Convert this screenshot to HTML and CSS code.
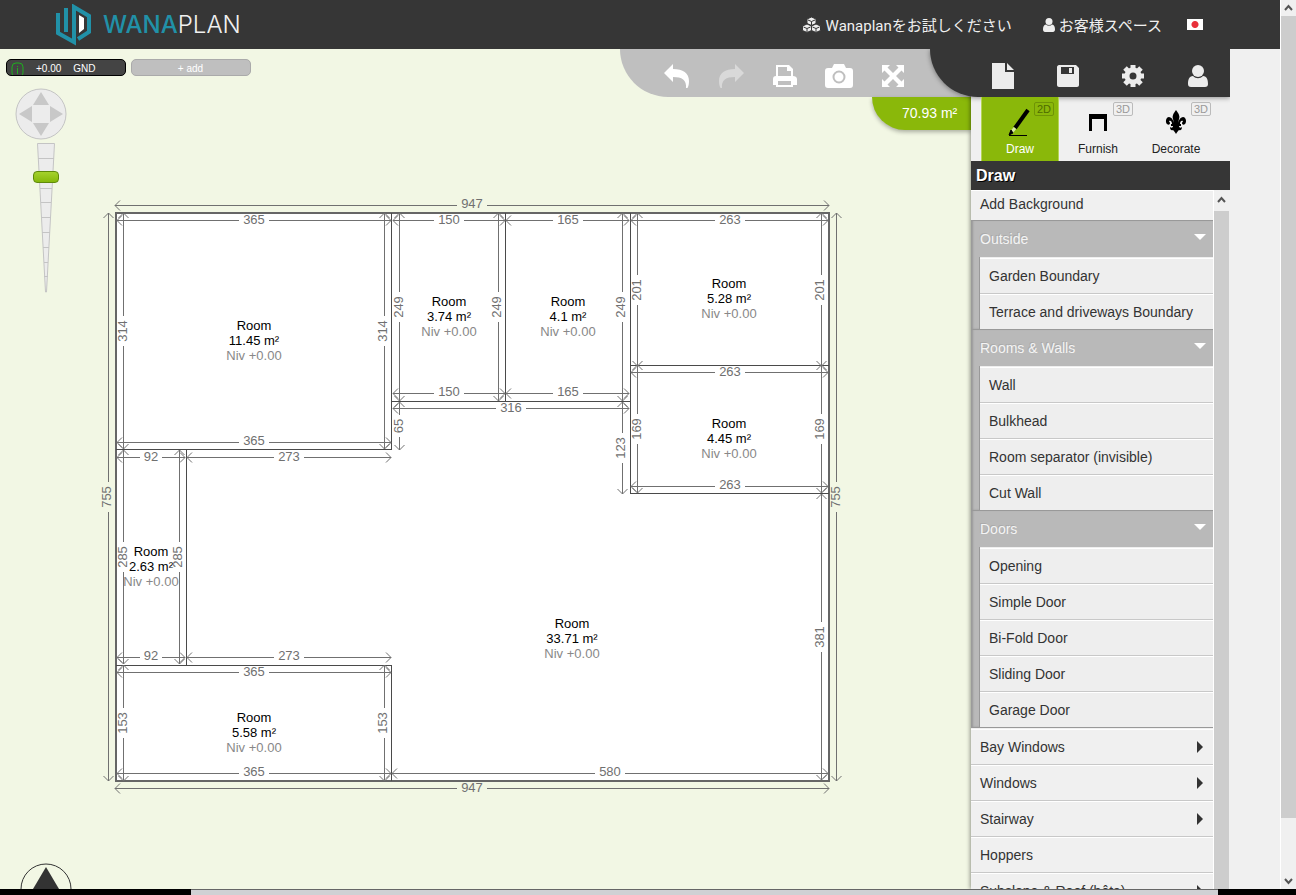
FILE: index.html
```html
<!DOCTYPE html>
<html lang="ja">

<head>
    <meta charset="UTF-8">
    <meta name="viewport" content="width=device-width, initial-scale=1.0">
    <title>Wanaplan</title>
    <link rel="stylesheet" href="styles.css">
</head>

<body>
    <div class="screen">
        <div class="page">
            <header class="header">
                <a href="#" class="logo">
                    <svg width="36" height="42" viewBox="0 0 36 42" fill="none" stroke="#2191a8" stroke-width="4">
                        <path d="M3 9v20l16 9V3l15 9v16l-11 7" />
                        <path d="M11 4v24" />
                        <path d="M24 11l5 3v11l-5 4z" fill="#fff" stroke="none" />
                    </svg>
                    <span class="logo-text"><b>WANA</b>PLAN</span>
                </a>
                <nav class="nav">
                    <a href="#">
                        <svg width="19" height="16" viewBox="0 0 19 16" fill="#eee" stroke="#363636" stroke-width="1">
                            <path d="M9.500 0l4.500 2v4.500l-4.500 2-4.500-2V2z" />
                            <path d="M5 7l4.500 2v4.500l-4.500 2-4.500-2V9z" />
                            <path d="M14 7l4.500 2v4.500l-4.500 2-4.500-2V9z" />
                            <path d="M6 3l3.500 1.500L13 3M1.500 10L5 11.500 8.500 10M10.500 10l3.500 1.500 3.500-1.500M9.500 4.500V8M5 11.500V15M14 11.500V15" fill="none" />
                        </svg>
                        Wanaplanをお試しください
                    </a>
                    <a href="#" class="account">
                        <svg width="12" height="14" viewBox="0 0 12 14" fill="#eee">
                            <circle cx="6" cy="3.500" r="3.500" />
                            <path d="M3 6.500c1.500 1.600 4.500 1.600 6 0 2.300.3 3 2.500 3 5 0 1.500-.8 2.500-2 2.500H2c-1.200 0-2-1-2-2.500 0-2.500.7-4.700 3-5z" />
                        </svg>
                        お客様スペース
                    </a>
                    <a href="#" class="flag" aria-label="日本語"></a>
                </nav>
            </header>

            <main class="workspace">
                <section class="canvas">
                    <svg class="plan" width="971" height="840" viewBox="0 49 971 840">
                        <defs>
                            <marker id="arrow" viewBox="0 0 7 12" refX="6" refY="6" markerWidth="7" markerHeight="12" markerUnits="userSpaceOnUse" orient="auto-start-reverse">
                                <path d="M1 1l5 5-5 5" fill="none" stroke="#707070" />
                            </marker>
                        </defs>
                        <rect class="outer" x="116" y="213" width="713" height="568" />
                        <path class="walls" d="M391 213V450M116 449H392M505 213V402M391 401H630M630 213V494M630 365H829M630 493H829M186 449V665M116 665H392M391 665V781" />
                        <g id="dims"></g>
                        <g id="rooms"></g>
                    </svg>

                    <div class="levels">
                        <button type="button" class="level">
                            <svg width="13" height="14" viewBox="0 0 13 14" fill="none" stroke="#1fae1f">
                                <rect x="1" y="1" width="11" height="14" rx="4" />
                                <path d="M6.500 4v1M6.500 6v6" />
                            </svg>
                            <span>+0.00</span>
                            <span>GND</span>
                        </button>
                        <button type="button" class="level add">+ add</button>
                    </div>

                    <div class="navigator">
                        <svg width="52" height="52" viewBox="0 0 52 52" fill="#c8c8c8">
                            <circle cx="26" cy="26" r="25" fill="#ececec" stroke="#c4c4c4" />
                            <path d="M26 4l8 13H18zM26 48l8-13H18zM4 26l13-8v16zM48 26l-13-8v16z" />
                        </svg>
                        <div class="zoom">
                            <svg width="26" height="150" viewBox="0 0 26 150" fill="#ececec" stroke="#c4c4c4">
                                <path d="M4.500.500h17L13.500 149h-1z" />
                                <path d="M5 15.500h16M6 30.500h14M7 45.500h12M8 59.500h10M9 74.500h8M9 89.500h8M10 104.500h6M11 119.500h4M11 133.500h4" />
                            </svg>
                            <input type="range" min="0" max="100" value="20" aria-label="Zoom">
                        </div>
                    </div>

                    <svg class="compass" width="52" height="26" viewBox="0 0 52 26">
                        <circle cx="26" cy="26" r="25" fill="none" stroke="#333" />
                        <path d="M26 4l13 22H13z" fill="#333" />
                    </svg>

                    <div class="tools">
                        <button type="button" aria-label="Undo">
                            <svg width="26" height="24" viewBox="0 0 26 24" fill="#fff">
                                <path d="M0 9L9 0v5c10 0 16 4 16 12 0 3-.5 5-1.500 7h-1.500c.8-8-4-11-13-11v5z" />
                            </svg>
                        </button>
                        <button type="button" aria-label="Redo">
                            <svg width="26" height="24" viewBox="0 0 26 24" fill="#d9d9d9">
                                <path d="M26 9l-9-9v5C7 5 1 9 1 17c0 3 .5 5 1.500 7H4c-.8-8 4-11 13-11v5z" />
                            </svg>
                        </button>
                        <button type="button" aria-label="Print">
                            <svg width="24" height="22" viewBox="0 0 24 22" fill="#fff">
                                <path fill-rule="evenodd" d="M3 0h13l4 4v7c2 0 4 1 4 3v6h-4v2H3v-2H0v-6c0-2 1-3 3-3zM5 2v9h13V6h-4V2zM5 16v4h13v-4z" />
                            </svg>
                        </button>
                        <button type="button" aria-label="Photo">
                            <svg width="28" height="24" viewBox="0 0 28 24" fill="#fff">
                                <path d="M9 0h10l2 4h4c2 0 3 1 3 3v14c0 2-1 3-3 3H3c-2 0-3-1-3-3V7c0-2 1-3 3-3h4z" />
                                <circle cx="14" cy="13" r="5.500" stroke="#bfbfbf" stroke-width="2" />
                            </svg>
                        </button>
                        <button type="button" aria-label="Full screen">
                            <svg width="22" height="22" viewBox="0 0 22 22" fill="#fff">
                                <path d="M0 0h8L5.500 2.500 11 8l5.500-5.500L14 0h8v8l-2.500-2.500L14 11l5.500 5.500L22 14v8h-8l2.500-2.500L11 14l-5.500 5.500L8 22H0v-8l2.500 2.500L8 11 2.500 5.500 0 8z" />
                            </svg>
                        </button>
                    </div>
                    <div class="area">70.93 m²</div>
                </section>

                <aside class="panel">
                    <div class="file-bar">
                        <button type="button" aria-label="New">
                            <svg width="22" height="26" viewBox="0 0 22 26" fill="#ececec">
                                <path d="M0 0h13v9h9v17H0zM15 0l7 7h-7z" />
                            </svg>
                        </button>
                        <button type="button" aria-label="Save">
                            <svg width="22" height="22" viewBox="0 0 22 22" fill="#ececec">
                                <path fill-rule="evenodd" d="M2 0h17l3 3v17c0 1-1 2-2 2H2c-1 0-2-1-2-2V2c0-1 1-2 2-2zM4 2v7h13V2z" />
                                <path d="M12 3h3v5h-3z" />
                            </svg>
                        </button>
                        <button type="button" aria-label="Settings">
                            <svg width="22" height="22" viewBox="0 0 22 22">
                                <circle cx="11" cy="11" r="6" fill="none" stroke="#ececec" stroke-width="5" />
                                <path d="M11 0v4M11 18v4M0 11h4M18 11h4M3 3l3 3M16 16l3 3M3 19l3-3M16 6l3-3" stroke="#ececec" stroke-width="5" />
                            </svg>
                        </button>
                        <button type="button" aria-label="User">
                            <svg width="20" height="22" viewBox="0 0 20 22" fill="#ececec">
                                <circle cx="10" cy="6" r="6" />
                                <path d="M5 11c3 3 7 3 10 0 4 0 5 4 5 8 0 2-1 3-3 3H3c-2 0-3-1-3-3 0-4 1-8 5-8z" />
                            </svg>
                        </button>
                    </div>

                    <div class="tabs">
                        <button type="button" class="tab active">
                            <svg width="24" height="28" viewBox="0 0 24 28">
                                <path d="M20 2L7 20" stroke="#000" stroke-width="4" />
                                <path d="M7 20l-4 5" stroke="#d8e8a8" stroke-width="3" />
                                <path d="M3 22l-2 5 4-2zM1 27.500h18" stroke="#000" />
                            </svg>
                            Draw
                            <span class="badge">2D</span>
                        </button>
                        <button type="button" class="tab">
                            <svg width="24" height="28" viewBox="0 0 24 28">
                                <path d="M3 6h18v17h-3V11H6v12H3z" />
                            </svg>
                            Furnish
                            <span class="badge">3D</span>
                        </button>
                        <button type="button" class="tab">
                            <svg width="24" height="28" viewBox="0 0 24 28">
                                <path d="M12 2c3 4 4 6 3 9l-1 4c1-4 3-6 5-6 3 0 4 5 2 7-1 1-3 1-3-1 0-1 1-1 1-2-2-1-3 1-3 3h1v2h-2c0 2 2 2 3 1 0 2-1 4-3 3-1 1-2 2-3 4-1-2-2-3-3-4-2 1-3-1-3-3 1 1 3 1 3-1H7v-2h1c0-2-1-4-3-3 0 1 1 1 1 2 0 2-2 2-3 1-2-2-1-7 2-7 2 0 4 2 5 6l-1-4c-1-3 0-5 3-9z" />
                            </svg>
                            Decorate
                            <span class="badge">3D</span>
                        </button>
                    </div>

                    <h2 class="title">Draw</h2>

                    <div class="menu-area">
                        <ul class="menu">
                            <li class="first"><button type="button">Add Background</button></li>
                            <li class="group">
                                <button type="button" class="group-title">Outside</button>
                                <ul>
                                    <li><button type="button">Garden Boundary</button></li>
                                    <li><button type="button">Terrace and driveways Boundary</button></li>
                                </ul>
                            </li>
                            <li class="group">
                                <button type="button" class="group-title">Rooms &amp; Walls</button>
                                <ul>
                                    <li><button type="button">Wall</button></li>
                                    <li><button type="button">Bulkhead</button></li>
                                    <li><button type="button">Room separator (invisible)</button></li>
                                    <li><button type="button">Cut Wall</button></li>
                                </ul>
                            </li>
                            <li class="group last">
                                <button type="button" class="group-title">Doors</button>
                                <ul>
                                    <li><button type="button">Opening</button></li>
                                    <li><button type="button">Simple Door</button></li>
                                    <li><button type="button">Bi-Fold Door</button></li>
                                    <li><button type="button">Sliding Door</button></li>
                                    <li><button type="button">Garage Door</button></li>
                                </ul>
                            </li>
                            <li><button type="button" class="more">Bay Windows</button></li>
                            <li><button type="button" class="more">Windows</button></li>
                            <li><button type="button" class="more">Stairway</button></li>
                            <li><button type="button">Hoppers</button></li>
                            <li><button type="button" class="more">Subslope &amp; Roof (bêta)</button></li>
                        </ul>
                        <div class="scrollbar small">
                            <svg width="15" height="21" viewBox="0 0 15 21" fill="none" stroke="#555" stroke-width="2"><path d="M4 12l3.500-4 3.500 4" /></svg>
                            <div class="thumb"></div>
                        </div>
                    </div>
                </aside>
            </main>
        </div>

        <div class="scrollbar">
            <svg width="15" height="16" viewBox="0 0 15 16" fill="none" stroke="#555" stroke-width="2"><path d="M4 10l3.500-4 3.500 4" /></svg>
            <div class="thumb"></div>
            <svg class="down" width="15" height="16" viewBox="0 0 15 16" fill="none" stroke="#555" stroke-width="2"><path d="M4 6l3.500 4L11 6" /></svg>
        </div>

        <footer class="bottom"><div></div></footer>
    </div>

    <script src="plan.js"></script>
</body>

</html>
```
FILE: styles.css
```css
* {
    box-sizing: border-box;
}

body {
    margin: 0;
    font-family: "Liberation Sans", Arial, sans-serif;
    font-size: 14px;
    color: #333;
    background-color: #f0f0f0;
}

button {
    font: inherit;
    color: inherit;
    background: none;
    border: none;
    padding: 0;
    cursor: pointer;
}

ul {
    list-style: none;
    margin: 0;
    padding: 0;
}

.screen {
    display: grid;
    grid-template-columns: 1fr 16px;
    grid-template-rows: minmax(0, 1fr) 6px;
    height: 100vh;
    overflow: hidden;
}

.page {
    display: flex;
    flex-direction: column;
    min-width: 0;
}

/* Header */
.header {
    display: flex;
    justify-content: space-between;
    align-items: center;
    height: 49px;
    flex: none;
    padding: 0 77px 0 55px;
    background-color: #363636;
}

.header a {
    color: #f0f0f0;
    text-decoration: none;
}

.logo {
    display: flex;
    align-items: center;
    gap: 12px;
}

.logo-text {
    font-family: Inter, sans-serif;
    font-size: 24px;
    font-weight: 300;
}

.logo-text b {
    font-weight: 500;
    color: #2191a8;
}

.nav {
    display: flex;
    align-items: center;
    font: 15px Roboto, "Noto Sans CJK JP", sans-serif;
}

.nav a {
    display: flex;
    align-items: center;
    gap: 5px;
}

.nav .account {
    gap: 4px;
    margin: 0 25px 0 31px;
}

.nav .flag {
    width: 16px;
    height: 11px;
    background: radial-gradient(circle, #e8303a 3px, #fff 4px);
}

/* Workspace */
.workspace {
    display: flex;
    flex: 1;
    min-height: 0;
    padding-right: 50px;
}

.canvas {
    position: relative;
    flex: 1;
    min-width: 0;
    overflow: hidden;
    background-color: #f2f7e4;
}

.plan {
    position: absolute;
    top: 0;
    left: 0;
    font-size: 13px;
    text-anchor: middle;
}

.outer {
    fill: #fff;
    stroke: #666;
    stroke-width: 2;
    shape-rendering: crispEdges;
}

.walls {
    fill: none;
    stroke: #4a4a4a;
    shape-rendering: crispEdges;
}

.dim line {
    stroke: #707070;
}

.dim text {
    fill: #707070;
}

.room .niv {
    fill: #888;
}

.levels {
    position: relative;
    display: flex;
    gap: 5px;
    padding: 10px 6px;
}

.level {
    display: flex;
    align-items: center;
    width: 120px;
    height: 17px;
    padding: 2px 5px 0 4px;
    overflow: hidden;
    font-size: 10px;
    color: #fff;
    background-color: #444;
    border: 1px solid #000;
    border-radius: 5px;
}

.level span {
    margin-left: 12px;
}

.level.add {
    justify-content: center;
    background-color: #bfbfbf;
    border-color: #aaa;
}

.navigator {
    position: relative;
    width: 52px;
    margin: 2px 15px;
}

.navigator svg {
    display: block;
}

.zoom {
    position: relative;
    width: 26px;
    margin: 3px 0 0 18px;
}

.zoom input {
    position: absolute;
    top: 0;
    left: 0;
    width: 26px;
    height: 150px;
    margin: 0;
    appearance: none;
    background: none;
    writing-mode: vertical-lr;
}

.zoom input::-webkit-slider-thumb {
    appearance: none;
    width: 26px;
    height: 12px;
    background: linear-gradient(#a5d22d, #86b90b);
    border: 1px solid #5f8a0a;
    border-radius: 4px;
}

.compass {
    position: absolute;
    left: 20px;
    bottom: 0;
}

.tools {
    position: absolute;
    top: 0;
    right: 0;
    display: flex;
    width: 351px;
    height: 48px;
    padding: 6px 0 0 30px;
    background-color: #bfbfbf;
    border-bottom-left-radius: 48px;
}

.tools button {
    display: flex;
    justify-content: center;
    align-items: center;
    width: 54px;
}

.area {
    position: absolute;
    top: 48px;
    right: 0;
    width: 99px;
    height: 33px;
    padding-left: 30px;
    line-height: 32px;
    color: #fff;
    background-color: #8ab80a;
    border-bottom-left-radius: 33px;
    box-shadow: 0 2px 4px rgba(0, 0, 0, 0.3);
}

/* Right panel */
.panel {
    position: relative;
    display: flex;
    flex-direction: column;
    width: 259px;
    background-color: #f0f0f0;
    box-shadow: -1px 0 4px rgba(0, 0, 0, 0.4);
    clip-path: inset(0 0 0 -50px);
}

.file-bar {
    position: relative;
    display: flex;
    flex: none;
    height: 48px;
    margin-left: -41px;
    padding: 6px 0 0 41px;
    background-color: #363636;
    border-bottom-left-radius: 48px;
    box-shadow: 0 1px 5px rgba(0, 0, 0, 0.4);
}

.file-bar button {
    display: flex;
    flex: 1;
    justify-content: center;
    align-items: center;
}

.tabs {
    display: flex;
    flex: none;
    height: 64px;
    padding-left: 10px;
}

.tab {
    position: relative;
    display: flex;
    flex-direction: column;
    align-items: center;
    gap: 6px;
    width: 78px;
    padding-top: 11px;
    font-size: 12px;
    color: #222;
}

.tab.active {
    color: #fff;
    background-color: #8ab80a;
    border: 1px solid #b5d455;
    border-width: 0 1px;
}

.badge {
    position: absolute;
    top: 5px;
    right: 4px;
    padding: 0 2px;
    font-size: 11px;
    color: #999;
    border: 1px solid #bbb;
    border-radius: 2px;
}

.active .badge {
    color: #4f6c00;
    border-color: #6f9406;
}

.title {
    flex: none;
    margin: 0;
    padding-left: 5px;
    font-size: 16px;
    line-height: 29px;
    color: #fff;
    text-shadow: 1px 1px 0 #000;
    background-color: #363636;
}

.menu-area {
    display: flex;
    flex: 1;
    min-height: 0;
}

.menu {
    flex: 1;
    overflow: hidden;
}

.menu button {
    display: flex;
    justify-content: space-between;
    align-items: center;
    width: 100%;
    height: 36px;
    padding: 1px 7px 0 9px;
    border-top: 1px solid #c8c8c8;
    box-shadow: inset 0 1px 0 #fff;
}

.menu .first button {
    height: 30px;
    padding-top: 0;
    border-top: none;
    padding-bottom: 2px;
}

.menu .group {
    background-color: #b9b9b9;
    box-shadow: inset 2px 0 2px #999;
}

.menu .group-title {
    height: 37px;
    padding-top: 0;
    color: #f4f4f4;
    text-shadow: -1px -1px 0 #aaa;
    border-top: 1px solid #999;
    box-shadow: none;
}

.group ul {
    margin-left: 8px;
    background-color: #eee;
    border-left: 1px solid #999;
}

.group li:first-child button {
    border-top-color: #eee;
}

.menu .last {
    border-bottom: 1px solid #999;
}

.last + li button {
    border-top-color: #f0f0f0;
}

.group-title::after {
    content: "";
    margin-bottom: 4px;
    border: 6px solid transparent;
    border-top-color: #fff;
    border-bottom: none;
}

.more::after {
    content: "";
    margin-right: 3px;
    border: 6px solid transparent;
    border-left-color: #333;
    border-right: none;
}

/* Scrollbars */
.scrollbar {
    display: flex;
    flex-direction: column;
    background-color: #f0f0f0;
    border-left: 1px solid #fff;
}

.scrollbar.small {
    width: 17px;
}

.thumb {
    flex: 1;
    background-color: #cdcdcd;
}

.small .thumb {
    margin-right: 1px;
}

.scrollbar .down {
    margin-top: 55px;
}

.bottom {
    grid-column: 1 / -1;
    display: flex;
    background-color: #000;
}

.bottom div {
    flex: 1;
    margin: 0 78px 0 191px;
    background-color: #d0d1d4;
    border-top: 1px solid #666;
}
```
FILE: plan.js
```js
const SVG = 'http://www.w3.org/2000/svg';

// x1, x2, y, baseline, label
const horizontal = [
    [115, 829, 205, 208, '947'],
    [117, 391, 220, 224, '365'],
    [393, 505, 220, 224, '150'],
    [506, 629, 220, 224, '165'],
    [631, 828, 220, 224, '263'],
    [631, 828, 372, 376, '263'],
    [393, 505, 393, 396, '150'],
    [506, 629, 393, 396, '165'],
    [393, 629, 408, 412, '316'],
    [117, 391, 442, 445, '365'],
    [117, 185, 457, 461, '92'],
    [187, 391, 457, 461, '273'],
    [631, 828, 486, 489, '263'],
    [117, 185, 657, 660, '92'],
    [187, 391, 657, 660, '273'],
    [117, 391, 672, 676, '365'],
    [117, 391, 773, 776, '365'],
    [392, 828, 773, 776, '580'],
    [115, 829, 788, 792, '947']
];

// y1, y2, x, baseline, label
const vertical = [
    [213, 781, 108, 111, '755'],
    [213, 449, 123, 127, '314'],
    [213, 449, 384, 387, '314'],
    [213, 401, 399, 403, '249'],
    [213, 401, 498, 501, '249'],
    [213, 401, 622, 625, '249'],
    [213, 366, 637, 641, '201'],
    [213, 366, 821, 824, '201'],
    [365, 493, 637, 641, '169'],
    [365, 493, 821, 824, '169'],
    [402, 450, 399, 403, '65'],
    [402, 494, 622, 625, '123'],
    [450, 664, 123, 127, '285'],
    [450, 664, 179, 182, '285'],
    [665, 781, 123, 127, '153'],
    [665, 781, 384, 387, '153'],
    [494, 780, 821, 824, '381'],
    [213, 781, 836, 840, '755']
];

// center x, first baseline, area
const rooms = [
    [254, 330, '11.45 m²'],
    [449, 306, '3.74 m²'],
    [568, 306, '4.1 m²'],
    [729, 288, '5.28 m²'],
    [729, 428, '4.45 m²'],
    [151, 556, '2.63 m²'],
    [572, 628, '33.71 m²'],
    [254, 722, '5.58 m²']
];

function add(parent, name, attrs, text) {
    const el = document.createElementNS(SVG, name);
    for (const key in attrs) {
        el.setAttribute(key, attrs[key]);
    }
    if (text) {
        el.textContent = text;
    }
    parent.appendChild(el);
    return el;
}

// two half lines with the label in the gap between them
function drawDim(from, to, pos, base, label, isVertical) {
    const g = add(document.getElementById('dims'), 'g', { class: 'dim' });
    const mid = Math.round((from + to) / 2);
    const gap = label.length > 2 ? 15 : 11;
    const line = pos + 0.5;

    if (isVertical) {
        add(g, 'line', { x1: line, x2: line, y1: mid - gap, y2: from, 'marker-end': 'url(#arrow)' });
        add(g, 'line', { x1: line, x2: line, y1: mid + gap, y2: to, 'marker-end': 'url(#arrow)' });
        add(g, 'text', { transform: `translate(${base} ${mid}) rotate(-90)` }, label);
    } else {
        add(g, 'line', { x1: mid - gap, x2: from, y1: line, y2: line, 'marker-end': 'url(#arrow)' });
        add(g, 'line', { x1: mid + gap, x2: to, y1: line, y2: line, 'marker-end': 'url(#arrow)' });
        add(g, 'text', { x: mid, y: base }, label);
    }
}

horizontal.forEach(d => drawDim(...d, false));
vertical.forEach(d => drawDim(...d, true));

rooms.forEach(([x, y, area]) => {
    const g = add(document.getElementById('rooms'), 'g', { class: 'room' });
    add(g, 'text', { x: x, y: y }, 'Room');
    add(g, 'text', { x: x, y: y + 15 }, area);
    add(g, 'text', { x: x, y: y + 30, class: 'niv' }, 'Niv +0.00');
});
```
